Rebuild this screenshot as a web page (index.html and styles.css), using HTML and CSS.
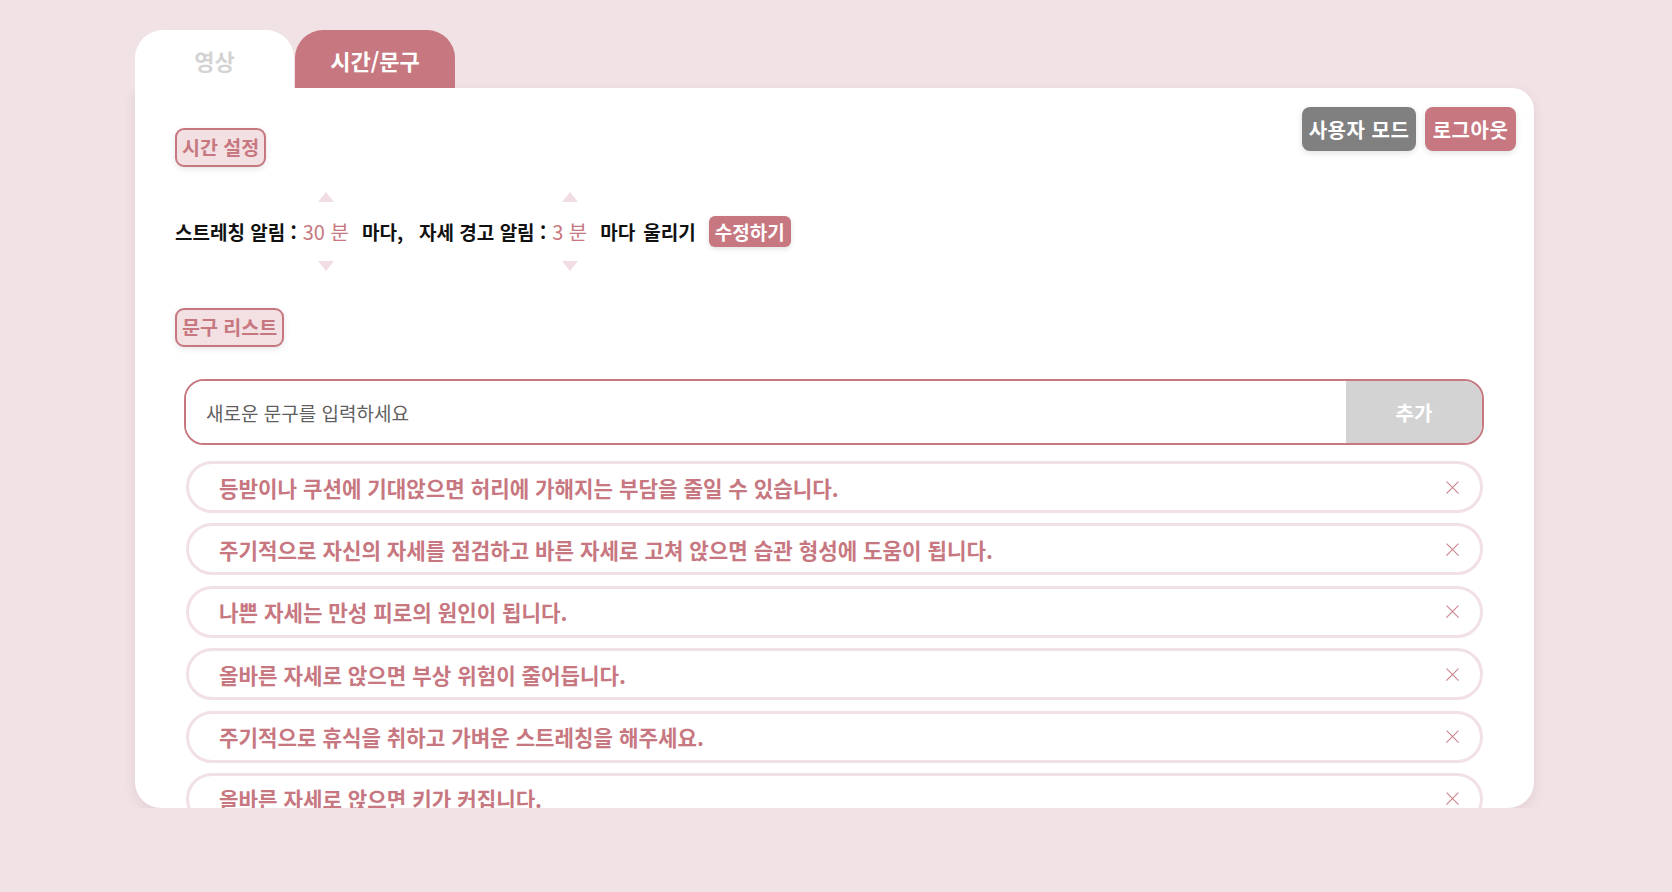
FILE: index.html
```html
<!DOCTYPE html>
<html lang="ko">
<head>
  <meta charset="UTF-8" />
  <meta name="viewport" content="width=device-width, initial-scale=1.0"/>
  <title>자세 알리미 - 시간/문구</title>
  <link rel="stylesheet" href="styles.css">
</head>
<body>
  <div class="wrap">
    <div class="tabs">
      <div class="tab">영상</div>
      <div class="tab active">시간/문구</div>
    </div>

    <div class="card">
      <div class="card-head">
        <div class="section-label">시간 설정</div>
        <div class="head-buttons">
          <button class="btn btn-gray">사용자 모드</button>
          <button class="btn btn-rose">로그아웃</button>
        </div>
      </div>

      <!-- 알림 주기 -->
      <div class="time-row">
        <span class="t-word">스트레칭 알림 :</span>
        <div class="spin">
          <span class="arrow up"></span>
          <span class="spin-value">30 분</span>
          <span class="arrow down"></span>
        </div>
        <span class="t-word">마다,</span>
        <span class="t-word wide">자세 경고 알림 :</span>
        <div class="spin">
          <span class="arrow up"></span>
          <span class="spin-value">3 분</span>
          <span class="arrow down"></span>
        </div>
        <span class="t-word">마다</span>
        <span class="t-word tight">울리기</span>
        <button class="btn-edit">수정하기</button>
      </div>

      <div class="section-label list-label">문구 리스트</div>

      <div class="phrase-area">
        <form class="add-form" id="addForm">
          <input type="text" name="phrase" placeholder="새로운 문구를 입력하세요" />
          <button type="submit">추가</button>
        </form>

        <ul class="phrase-list" id="phraseList">
          <li>등받이나 쿠션에 기대앉으면 허리에 가해지는 부담을 줄일 수 있습니다.<span class="x"></span></li>
          <li>주기적으로 자신의 자세를 점검하고 바른 자세로 고쳐 앉으면 습관 형성에 도움이 됩니다.<span class="x"></span></li>
          <li>나쁜 자세는 만성 피로의 원인이 됩니다.<span class="x"></span></li>
          <li>올바른 자세로 앉으면 부상 위험이 줄어듭니다.<span class="x"></span></li>
          <li>주기적으로 휴식을 취하고 가벼운 스트레칭을 해주세요.<span class="x"></span></li>
          <li>올바른 자세로 앉으면 키가 커집니다.<span class="x"></span></li>
        </ul>
      </div>
    </div>
  </div>
</body>
</html>
```

FILE: styles.css
```css
body {
  margin: 0;
  background: #f1e2e5;
  font-family: "Noto Sans CJK KR", sans-serif;
  color: #111;
}

.wrap {
  width: 1399px;
  margin: 30px 0 0 135px;
}

.tabs {
  display: flex;
}

.tab {
  width: 159px;
  height: 58px;
  line-height: 60px;
  text-align: center;
  background: #fff;
  color: #d3d3d3;
  font-size: 22px;
  font-weight: bold;
  border-radius: 28px 28px 0 0;
}

.tab.active {
  width: 160px;
  margin-left: 1px;
  background: #c7777f;
  color: #fff;
}

.card {
  height: 720px;
  box-sizing: border-box;
  padding: 19px 18px 0 40px;
  background: #fff;
  border-radius: 0 22px 26px 26px;
  box-shadow: 0 4px 12px rgba(120, 80, 90, 0.12);
  overflow: hidden;
}

.card-head {
  display: flex;
  justify-content: space-between;
  align-items: flex-start;
}

.card-head .section-label {
  margin-top: 21px;
}

.section-label {
  display: inline-block;
  height: 39px;
  box-sizing: border-box;
  padding: 0 5px;
  line-height: 34px;
  font-size: 19.5px;
  font-weight: bold;
  color: #c7777f;
  background: #f3e0e3;
  border: 2px solid #c7777f;
  border-radius: 9px;
  box-shadow: 0 2px 6px rgba(0, 0, 0, 0.1);
}

.head-buttons {
  display: flex;
  gap: 9px;
}

.btn {
  height: 44px;
  padding: 0;
  border: none;
  border-radius: 8px;
  font-family: inherit;
  font-size: 20px;
  font-weight: bold;
  letter-spacing: 0.5px;
  white-space: nowrap;
  color: #fff;
  box-shadow: 0 2px 6px rgba(0, 0, 0, 0.12);
}

.btn-gray {
  width: 114px;
  background: #808080;
}

.btn-rose {
  width: 91px;
  background: #c7777f;
}

.time-row {
  display: flex;
  align-items: center;
  gap: 13px;
  margin-top: 25px;
}

.t-word {
  font-size: 19px;
  font-weight: bold;
  white-space: pre;
}

.t-word.wide {
  margin-left: 3px;
}

.t-word.tight {
  margin-left: -5px;
}

.spin {
  display: flex;
  flex-direction: column;
  align-items: center;
  gap: 10px;
  margin-left: -7px;
}

.spin-value {
  height: 39px;
  line-height: 39px;
  font-size: 20px;
  color: #c7777f;
}

.arrow {
  width: 0;
  height: 0;
  border-left: 8px solid transparent;
  border-right: 8px solid transparent;
}

.arrow.up {
  border-bottom: 10px solid #f1dde2;
}

.arrow.down {
  border-top: 10px solid #f1dde2;
}

.btn-edit {
  height: 31px;
  width: 82px;
  padding: 0;
  border: none;
  border-radius: 6px;
  background: #c7777f;
  color: #fff;
  font-family: inherit;
  font-size: 19px;
  font-weight: bold;
  white-space: nowrap;
  box-shadow: 0 2px 5px rgba(0, 0, 0, 0.12);
}

.list-label {
  margin-top: 37px;
}

.phrase-area {
  margin: 32px 32px 0 9px;
}

.add-form {
  display: flex;
  height: 66px;
  box-sizing: border-box;
  border: 2px solid #c7777f;
  border-radius: 20px;
  overflow: hidden;
}

.add-form input {
  flex: 1;
  border: none;
  outline: none;
  padding: 0 0 0 20px;
  font-family: inherit;
  font-size: 19px;
  color: #333;
}

.add-form input::placeholder {
  color: #5f5f5f;
}

.add-form button {
  width: 136px;
  border: none;
  background: #d3d3d3;
  color: #fff;
  font-family: inherit;
  font-size: 20px;
  font-weight: bold;
}

.phrase-list {
  list-style: none;
  margin: 16px 1px 0 2px;
  padding: 0;
  display: flex;
  flex-direction: column;
  gap: 10.4px;
}

.phrase-list li {
  display: flex;
  align-items: center;
  justify-content: space-between;
  height: 52px;
  box-sizing: border-box;
  padding: 0 21px 0 30px;
  border: 3px solid #f1e0e4;
  border-radius: 26px;
  font-size: 21.2px;
  font-weight: bold;
  color: #c7777f;
}

/* 삭제 버튼 (X) */
.x {
  position: relative;
  width: 13px;
  height: 13px;
  flex-shrink: 0;
}

.x::before,
.x::after {
  content: "";
  position: absolute;
  left: -2px;
  top: 6px;
  width: 17px;
  height: 1.3px;
  background: #c97f86;
  transform: rotate(45deg);
}

.x::after {
  transform: rotate(-45deg);
}
```
